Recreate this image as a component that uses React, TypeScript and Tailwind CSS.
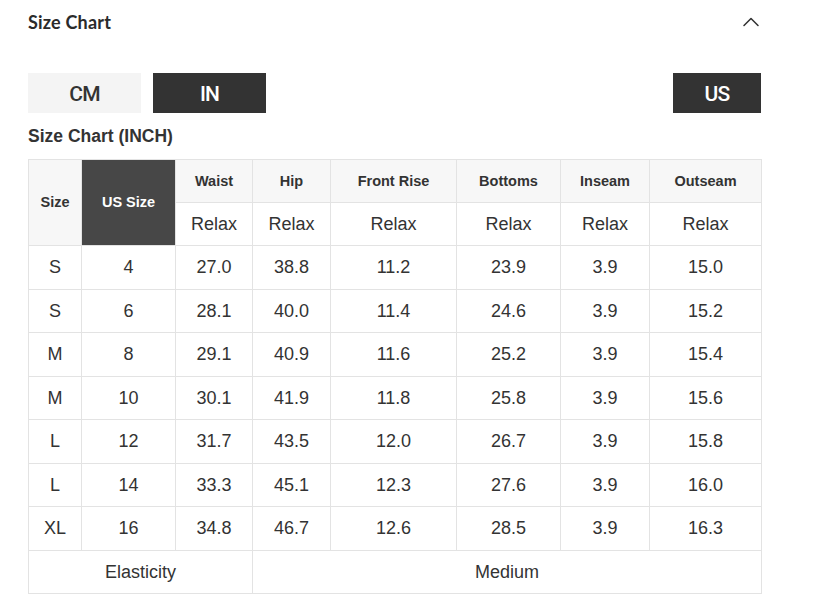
import { ChevronUp } from 'lucide-react';

const columns = [
  { key: 'waist', label: 'Waist' },
  { key: 'hip', label: 'Hip' },
  { key: 'frontRise', label: 'Front Rise' },
  { key: 'bottoms', label: 'Bottoms' },
  { key: 'inseam', label: 'Inseam' },
  { key: 'outseam', label: 'Outseam' },
];

const rows = [
  ['S', '4', '27.0', '38.8', '11.2', '23.9', '3.9', '15.0'],
  ['S', '6', '28.1', '40.0', '11.4', '24.6', '3.9', '15.2'],
  ['M', '8', '29.1', '40.9', '11.6', '25.2', '3.9', '15.4'],
  ['M', '10', '30.1', '41.9', '11.8', '25.8', '3.9', '15.6'],
  ['L', '12', '31.7', '43.5', '12.0', '26.7', '3.9', '15.8'],
  ['L', '14', '33.3', '45.1', '12.3', '27.6', '3.9', '16.0'],
  ['XL', '16', '34.8', '46.7', '12.6', '28.5', '3.9', '16.3'],
];

const cellCls = 'border border-[#e3e3e3] text-center align-middle p-0';

export default function App() {
  return (
    <div className="min-h-[610px] w-[825px] bg-white text-[#333]">
      <div className="w-[789px] pl-[28px] pr-[28px]">
        <div className="flex h-[44px] items-center justify-between">
          <div className="font-['Lato',sans-serif] text-[18px] font-bold tracking-[0.2px] text-[#2b2b2b]">
            Size Chart
          </div>
          <ChevronUp className="mr-[-4px] size-[28px] text-[#333]" strokeWidth={1.3} />
        </div>

        <div className="mt-[29px] flex items-center justify-between">
          <div className="flex gap-[12px]">
            <button className="h-[40px] w-[113px] bg-[#f4f4f4] pt-[3px] font-['Roboto',sans-serif] text-[21px] font-medium tracking-[-0.8px] text-[#333]">
              CM
            </button>
            <button className="h-[40px] w-[113px] bg-[#333] pt-[3px] font-['Roboto',sans-serif] text-[21px] font-medium tracking-[-0.8px] text-white">
              IN
            </button>
          </div>
          <button className="h-[40px] w-[88px] bg-[#333] pt-[3px] font-['Roboto',sans-serif] text-[21px] font-medium tracking-[-0.8px] text-white">
            US
          </button>
        </div>

        <div className="mt-[10px] font-['Liberation_Sans',Arial,sans-serif] text-[17.5px] leading-[26px] font-bold text-[#333]">
          Size Chart (INCH)
        </div>

        <table className="mt-[10px] w-[733px] table-fixed border-collapse font-['Liberation_Sans',Arial,sans-serif] text-[18px] text-[#333]">
          <colgroup>
            <col className="w-[53px]" />
            <col className="w-[94px]" />
            <col className="w-[77px]" />
            <col className="w-[78px]" />
            <col className="w-[126px]" />
            <col className="w-[104px]" />
            <col className="w-[89px]" />
            <col className="w-[112px]" />
          </colgroup>
          <thead>
            <tr className="h-[43px]">
              <th rowSpan={2} className={`${cellCls} bg-[#f7f7f7] text-[14.5px] font-bold`}>
                Size
              </th>
              <th rowSpan={2} className={`${cellCls} bg-[#474747] text-[14.5px] font-bold text-white`}>
                US Size
              </th>
              {columns.map(col => (
                <th key={col.key} className={`${cellCls} bg-[#f7f7f7] pt-[2px] text-[14.5px] font-bold`}>
                  {col.label}
                </th>
              ))}
            </tr>
            <tr className="h-[43px]">
              {columns.map(col => (
                <td key={col.key} className={`${cellCls} font-normal`}>
                  Relax
                </td>
              ))}
            </tr>
          </thead>
          <tbody>
            {rows.map((row, i) => (
              <tr key={i} className={i % 2 === 0 ? 'h-[44px]' : 'h-[43px]'}>
                {row.map((v, j) => (
                  <td key={j} className={cellCls}>
                    {v}
                  </td>
                ))}
              </tr>
            ))}
            <tr className="h-[43px]">
              <td colSpan={3} className={cellCls}>
                Elasticity
              </td>
              <td colSpan={5} className={cellCls}>
                Medium
              </td>
            </tr>
          </tbody>
        </table>
      </div>
    </div>
  );
}
